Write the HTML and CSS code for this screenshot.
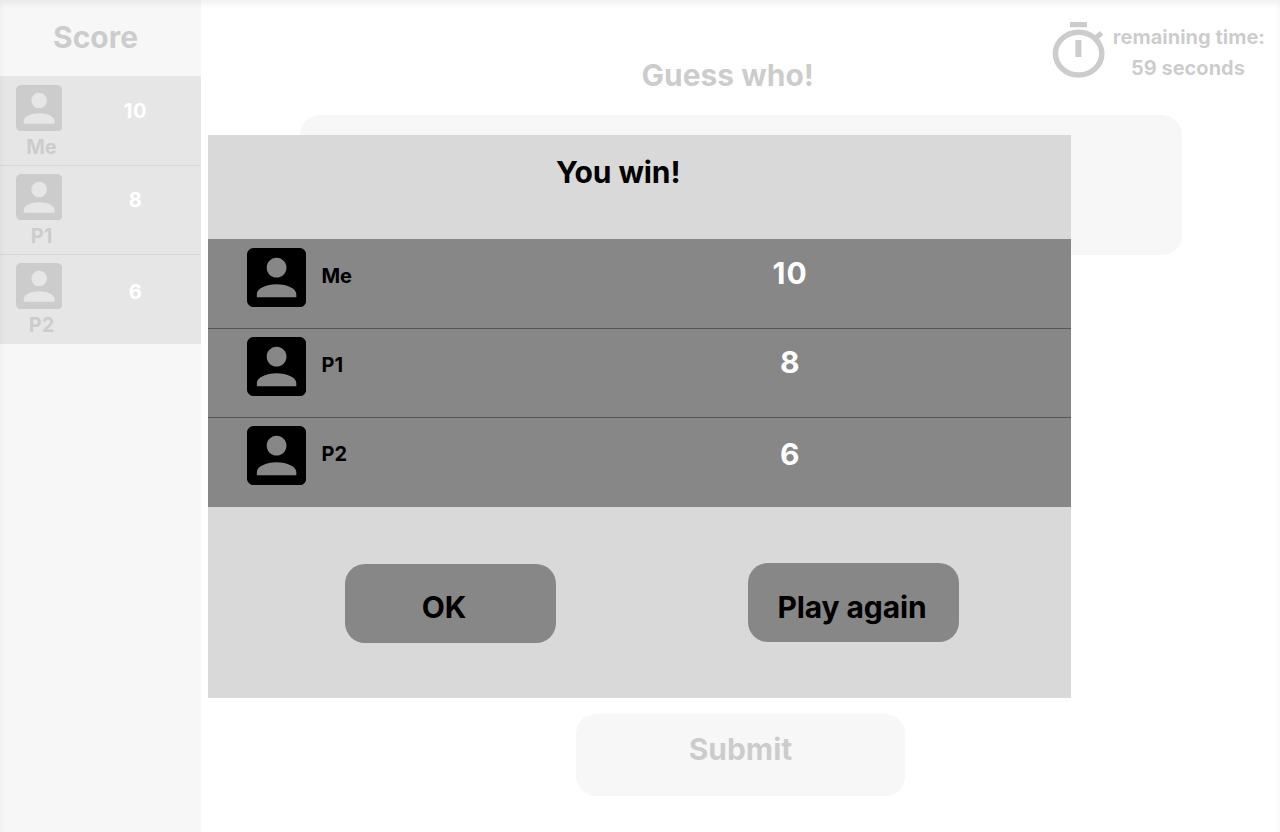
FILE: index.html
```html
<!DOCTYPE html>
<html lang="en">
<head>
<meta charset="utf-8">
<title>Guess who!</title>
<link rel="stylesheet" href="styles.css">
</head>
<body>
<svg width="0" height="0" class="defs">
  <symbol id="avatar" viewBox="3 3 18 18">
    <path fill-rule="evenodd" d="M3 5v14c0 1.1.9 2 2 2h14c1.1 0 2-.9 2-2V5c0-1.1-.9-2-2-2H5c-1.1 0-2 .9-2 2zm12 4c0 1.66-1.34 3-3 3s-3-1.34-3-3 1.34-3 3-3 3 1.34 3 3zM6 18v-1c0-1.66 2.69-3 6-3s6 1.34 6 3v1z"/>
  </symbol>
</svg>
<div class="screen">
  <aside class="sidebar">
    <h2 class="sidebar-title">Score</h2>
    <ul class="scores">
      <li class="score-row"><div class="player"><svg class="avatar"><use href="#avatar"/></svg><span>Me</span></div><span class="points">10</span></li>
      <li class="score-row"><div class="player"><svg class="avatar"><use href="#avatar"/></svg><span>P1</span></div><span class="points">8</span></li>
      <li class="score-row last"><div class="player"><svg class="avatar"><use href="#avatar"/></svg><span>P2</span></div><span class="points">6</span></li>
    </ul>
  </aside>
  <main class="game">
    <h1 class="game-title">Guess who!</h1>
    <div class="prompt"></div>
    <button class="submit">Submit</button>
    <div class="timer">
      <svg class="clock" width="54" height="58" viewBox="0 0 54 58">
        <path d="M18 0h17v5.3H18zM23.4 18h6v17h-6z"/>
        <ellipse cx="26.6" cy="31.6" rx="23.2" ry="21.4" fill="none" stroke="#000" stroke-width="5.5"/>
        <path d="M42.5 17L49.5 11" stroke="#000" stroke-width="5"/>
      </svg>
      <p class="timer-text">remaining time:<br><span class="seconds">59 seconds</span></p>
    </div>
  </main>
  <div class="veil"></div>
  <section class="dialog">
    <h2 class="dialog-title">You win!</h2>
    <ul class="results">
      <li class="result"><svg class="avatar-large"><use href="#avatar"/></svg><span class="name">Me</span><span class="total">10</span></li>
      <li class="result"><svg class="avatar-large"><use href="#avatar"/></svg><span class="name">P1</span><span class="total">8</span></li>
      <li class="result last"><svg class="avatar-large"><use href="#avatar"/></svg><span class="name">P2</span><span class="total">6</span></li>
    </ul>
    <div class="actions">
      <button class="action ok">OK</button>
      <button class="action again">Play again</button>
    </div>
  </section>
</div>
</body>
</html>
```
FILE: styles.css
```css
* { box-sizing: border-box; }
body, h1, h2, ul, p { margin: 0; padding: 0; }
ul { list-style: none; }
svg { display: block; flex: none; }
button { border: 0; border-radius: 20px; color: #000; font: inherit; padding: 0; }
.defs { position: absolute; }

.screen {
  position: relative;
  display: flex;
  width: 1280px;
  height: 832px;
  overflow: hidden;
  background: #fff;
  font: 700 20px/24px Inter, sans-serif;
}
h1, h2 { font-size: 30px; line-height: 36px; font-weight: 700; }

.sidebar { width: 201px; background: #d6d6d6; }
.sidebar-title { height: 76px; padding: 19px 0 0 53px; }
.score-row {
  display: flex;
  height: 89px;
  padding-top: 9px;
  background: #848484;
}
.score-row + .score-row { border-top: 1px solid #444; padding-top: 8px; }
.score-row.last { height: 90px; }
.player { width: 83px; text-align: center; }
.avatar { width: 46.4px; height: 46.4px; margin: -.2px 0 3.8px 15.8px; }
.points { width: 105px; padding-top: 14px; text-align: center; color: #fff; letter-spacing: .6px; }
.last .points { padding-top: 17px; }

.game {
  position: relative;
  flex: 1;
  display: flex;
  flex-direction: column;
  padding: 57px 0 0 99px;
}
.game-title { padding-left: 341.5px; }
.prompt { width: 882px; height: 140px; margin-top: 22px; border-radius: 20px; background: #d6d6d6; }
.submit {
  width: 329px;
  height: 82px;
  margin: 459px 0 0 276px;
  padding-bottom: 12px;
  background: #d6d6d6;
  font-size: 30px;
  line-height: 36px;
}
.timer { position: absolute; top: 22px; right: 15px; display: flex; gap: 7px; }
.timer-text { line-height: 31px; text-align: center; white-space: nowrap; }
.seconds { padding-right: 2px; }

.veil {
  position: absolute;
  inset: 0;
  background: rgba(255, 255, 255, .8);
  box-shadow: inset 0 4px 6px rgba(0, 0, 0, .06);
}

.dialog {
  position: absolute;
  left: 208px;
  top: 135px;
  width: 863px;
  height: 563px;
  background: #d9d9d9;
}
.dialog-title { height: 104px; padding: 19px 0 0 348px; letter-spacing: -.1px; }
.result {
  display: flex;
  height: 89px;
  padding: 9px 0 0 39px;
  background: #878787;
}
.result + .result { border-top: 1px solid #555; padding-top: 8px; }
.result.last { height: 90px; }
.avatar-large { width: 59.2px; height: 59.2px; }
.name { width: 384px; padding: 16px 0 0 15.3px; }
.total {
  width: 200px;
  padding-top: 7px;
  text-align: center;
  color: #fff;
  font-size: 30px;
  line-height: 36px;
  letter-spacing: 1px;
}
.last .total { padding-top: 10px; }
.actions { display: flex; gap: 192px; padding: 56px 0 0 137px; }
.action { width: 211px; height: 79px; background: #878787; font-size: 30px; line-height: 36px; }
.ok { margin-top: 1px; padding: 7px 13px 0 0; }
.again { padding: 9px 3px 0 0; letter-spacing: -.1px; }
```
